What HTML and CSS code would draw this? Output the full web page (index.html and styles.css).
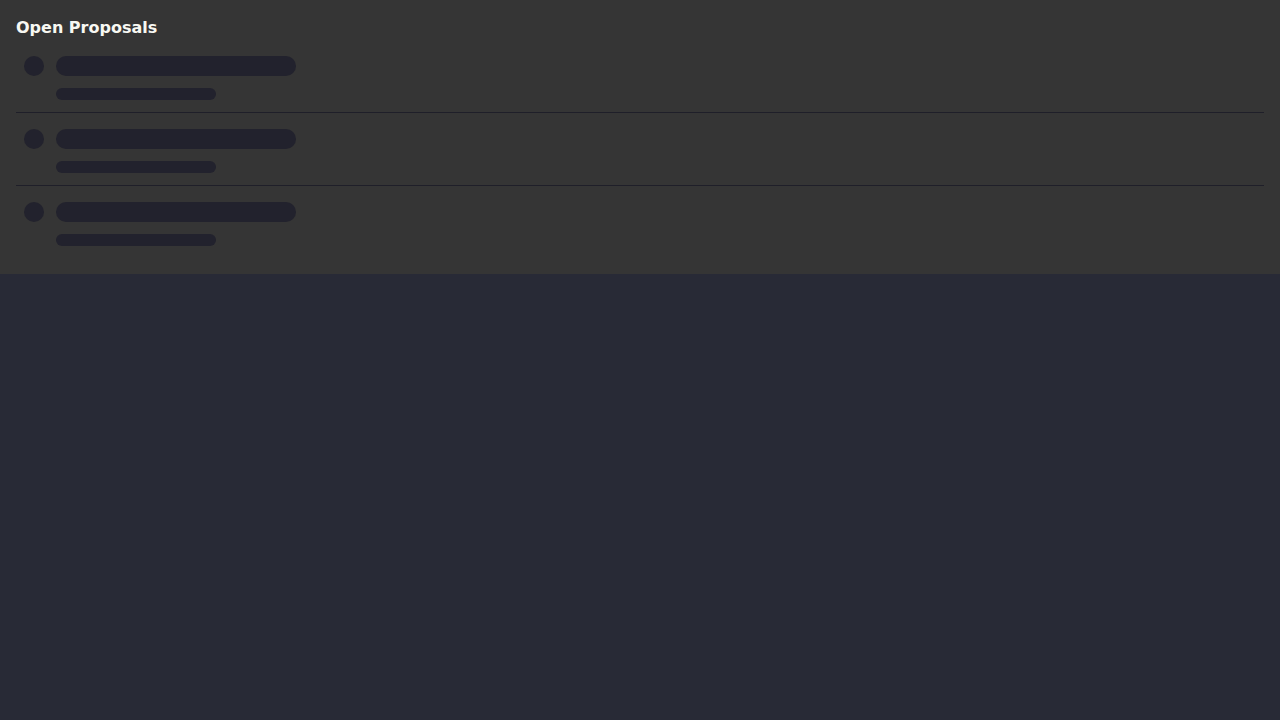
FILE: index.html
```html
<!DOCTYPE html>
<html>
<head>
<meta charset="utf-8">
<link rel="stylesheet" href="styles.css">
</head>
<body>
<section class="panel">
  <h2 class="title">Open Proposals</h2>
  <ul class="list">
    <li class="row">
      <span class="dot"></span>
      <div class="lines"><span class="bar bar-main"></span><span class="bar bar-sub"></span></div>
    </li>
    <li class="row">
      <span class="dot"></span>
      <div class="lines"><span class="bar bar-main"></span><span class="bar bar-sub"></span></div>
    </li>
    <li class="row">
      <span class="dot"></span>
      <div class="lines"><span class="bar bar-main"></span><span class="bar bar-sub"></span></div>
    </li>
  </ul>
</section>
</body>
</html>
```
FILE: styles.css
```css
html, body {
  margin: 0;
  padding: 0;
  background: #282a36;
  font-family: "DejaVu Sans", sans-serif;
}
.panel {
  background: #353535;
  padding: 16px;
}
.title {
  margin: 0;
  font-size: 16px;
  line-height: 24px;
  font-weight: bold;
  color: #f8f8f2;
}
.list {
  list-style: none;
  margin: 0;
  padding: 0;
}
.row {
  display: flex;
  gap: 12px;
  padding: 16px 8px 12px;
  border-bottom: 1px solid #1f1f29;
}
.row:last-child {
  border-bottom: none;
}
.dot {
  width: 20px;
  height: 20px;
  border-radius: 50%;
  background: #22222d;
  flex: none;
}
.lines {
  display: flex;
  flex-direction: column;
  gap: 12px;
}
.bar {
  display: block;
  background: #22222d;
}
.bar-main {
  width: 240px;
  height: 20px;
  border-radius: 10px;
}
.bar-sub {
  width: 160px;
  height: 12px;
  border-radius: 6px;
}
```
